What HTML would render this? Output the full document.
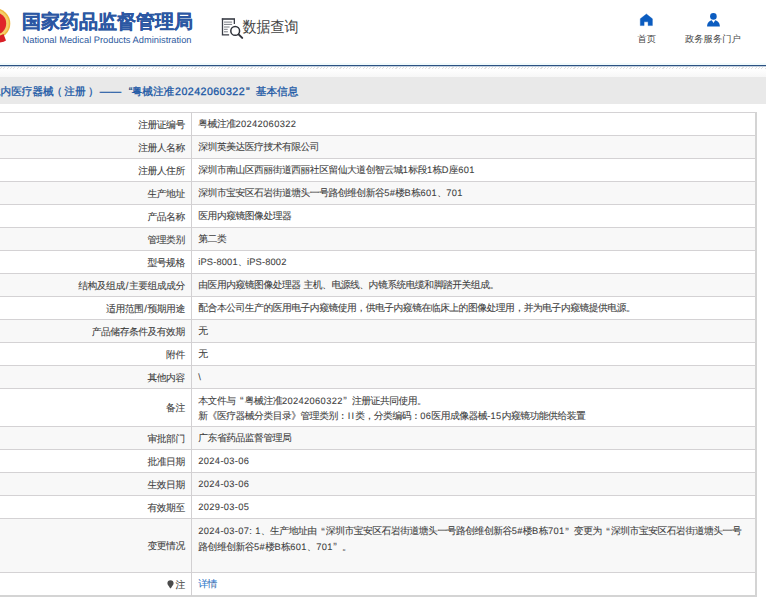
<!DOCTYPE html>
<html><head><meta charset="utf-8"><style>
*{margin:0;padding:0;box-sizing:border-box}
html,body{width:766px;height:604px;overflow:hidden;background:#fff}
body{position:relative;font-family:"Liberation Sans",sans-serif;color:#333;text-rendering:geometricPrecision}
.a{position:absolute;white-space:nowrap}
.lt{letter-spacing:0.35px;font-size:9.3px}
.qo{display:inline-block;width:9.3px;text-align:right;letter-spacing:0;font-size:10.5px;line-height:0;padding-right:1.2px;position:relative;top:0.6px;color:#555}
.qc{display:inline-block;width:9.3px;text-align:left;letter-spacing:0;font-size:10.5px;line-height:0;padding-left:0.6px;position:relative;top:0.6px;color:#555}
.lab{right:581.3px;text-align:right;font-size:9.8px;letter-spacing:-0.5px;line-height:22px;color:#3e3e3e;-webkit-text-stroke:0.08px #3e3e3e}
.con{left:198.3px;font-size:9.8px;letter-spacing:-0.5px;line-height:15.2px;color:#3e3e3e;-webkit-text-stroke:0.08px #3e3e3e}
.hl{left:0;width:755px;height:1px;background:#d4d2d4}
</style></head><body>
<svg class="a" style="left:0;top:0" width="20" height="50" viewBox="0 0 20 50">
  <circle cx="-5" cy="23.5" r="15.3" fill="#efb83c"/>
  <circle cx="-5" cy="23.5" r="13.8" fill="#f4cf6a"/>
  <circle cx="-5" cy="23.5" r="11.2" fill="#e0262a"/>
  <path d="M-10 34.5 Q-1 37 3.5 34 L6 40.5 Q3 43 -10 43 Z" fill="#d91f26"/>
</svg>
<div class="a" style="left:22px;top:10.8px;font-size:19px;font-weight:bold;color:#2b57a3;line-height:24px;-webkit-text-stroke:0.25px #2b57a3">国家药品监督管理局</div>
<div class="a" style="left:22.5px;top:34.5px;font-size:9.3px;color:#2d5a9e;line-height:11px">National Medical Products Administration</div>
<svg class="a" style="left:218px;top:14px" width="30" height="28" viewBox="0 0 30 28">
  <rect x="3.8" y="4.2" width="13.2" height="1.6" fill="#3a3d46"/>
  <path d="M16.35 5 V10 M4.5 4.5 V21.5 M3.8 20.9 H11.1" stroke="#3a3d46" stroke-width="1.3" fill="none"/>
  <path d="M6 8.1 H14.1 M6 10.4 H14.1 M6 13 H11.6 M6 15.3 H9.7 M6 17.8 H9.9" stroke="#6a6d75" stroke-width="0.9" fill="none"/>
  <circle cx="17.2" cy="16.9" r="4.4" stroke="#2f323a" stroke-width="1.5" fill="#fff"/>
  <path d="M20.6 20.4 L24.2 23.9" stroke="#2f323a" stroke-width="2" stroke-linecap="round"/>
</svg>
<div class="a" style="left:242.5px;top:15.2px;font-size:14px;color:#444;line-height:20px;transform:scaleY(1.1);transform-origin:0 0">数据查询</div>
<svg class="a" style="left:0;top:0" width="766" height="50" viewBox="0 0 766 50">
  <path d="M646.4 14 L652.4 18.8 V25.6 H648.1 V21.8 H644.1 V25.6 H640.3 V18.8 Z" fill="#0b5cc0" stroke="#0b5cc0" stroke-width="0.4" stroke-linejoin="round"/>
  <circle cx="713.4" cy="16.4" r="3.3" fill="#0b5cc0"/>
  <path d="M707.1 26.6 C707.1 22.6 709.3 20.7 711.8 20.2 L713.5 23 L715.2 20.2 C717.7 20.7 719.9 22.6 719.9 26.6 Z" fill="#0b5cc0"/>
</svg>
<div class="a" style="left:637.5px;top:32.5px;font-size:9.3px;color:#444;line-height:12px">首页</div>
<div class="a" style="left:685px;top:32.5px;font-size:9.3px;color:#444;line-height:12px">政务服务门户</div>
<div class="a" style="left:0;top:65px;width:766px;height:1px;background:#2b5283"></div>
<div class="a" style="left:0;top:66px;width:766px;height:1px;background:#c3cedb"></div><div class="a" style="left:0;top:63px;width:766px;height:2px;background:#f2fbfc"></div>
<div class="a" style="left:0;top:67px;width:766px;height:2px;background:repeating-linear-gradient(135deg,#fff 0,#fff 1.1px,#e2e2e2 1.1px,#e2e2e2 1.9px,#fff 1.9px,#fff 2.33px)"></div>
<div class="a" style="left:0;top:69px;width:766px;height:8px;background:linear-gradient(#fff,#f7f7f7)"></div>
<div class="a" style="left:0;top:77px;width:766px;height:27px;background:#e9e9e9"></div>

<div class="a" style="left:-10.15px;top:83.7px;font-size:10.65px;color:#1b58a5;line-height:16px;-webkit-text-stroke:0.3px #1b58a5">境内医疗器械<span style="position:relative;left:-2px">（</span>注册<span style="position:relative;left:2.3px">）</span><span style="display:inline-block;width:3.5px"></span>——<span class="qo" style="width:10.65px;font-size:11px;padding-right:0;position:relative;left:0.8px;top:0">“</span>粤械注准<span class="lt" style="letter-spacing:0.45px;font-size:10.65px;padding-left:0.8px">20242060322</span><span class="qc" style="width:10.65px;font-size:11px;padding-left:1px;top:0">”</span>基本信息</div>
<div class="a" style="left:0;top:136px;width:755px;height:22px;background:#f8f8f8"></div>
<div class="a" style="left:0;top:182px;width:755px;height:22px;background:#f8f8f8"></div>
<div class="a" style="left:0;top:228px;width:755px;height:22px;background:#f8f8f8"></div>
<div class="a" style="left:0;top:274px;width:755px;height:22px;background:#f8f8f8"></div>
<div class="a" style="left:0;top:320px;width:755px;height:22px;background:#f8f8f8"></div>
<div class="a" style="left:0;top:366px;width:755px;height:22px;background:#f8f8f8"></div>
<div class="a" style="left:0;top:427px;width:755px;height:22px;background:#f8f8f8"></div>
<div class="a" style="left:0;top:473px;width:755px;height:22px;background:#f8f8f8"></div>
<div class="a" style="left:0;top:519px;width:755px;height:53px;background:#f8f8f8"></div>
<div class="a hl" style="top:112px"></div>
<div class="a hl" style="top:135px"></div>
<div class="a hl" style="top:158px"></div>
<div class="a hl" style="top:181px"></div>
<div class="a hl" style="top:204px"></div>
<div class="a hl" style="top:227px"></div>
<div class="a hl" style="top:250px"></div>
<div class="a hl" style="top:273px"></div>
<div class="a hl" style="top:296px"></div>
<div class="a hl" style="top:319px"></div>
<div class="a hl" style="top:342px"></div>
<div class="a hl" style="top:365px"></div>
<div class="a hl" style="top:388px"></div>
<div class="a hl" style="top:426px"></div>
<div class="a hl" style="top:449px"></div>
<div class="a hl" style="top:472px"></div>
<div class="a hl" style="top:495px"></div>
<div class="a hl" style="top:518px"></div>
<div class="a hl" style="top:572px"></div>
<div class="a" style="left:0;top:595px;width:757px;height:2px;background:#d4d4d4"></div>
<div class="a" style="left:755px;top:112px;width:2px;height:485px;background:#d4d4d4"></div>
<div class="a" style="left:191px;top:112px;width:1px;height:484px;background:#d2d0d2"></div>
<div class="a lab" style="top:114.5px">注册证编号</div>
<div class="a con" style="top:117.4px">粤械注准<span class="lt">20242060322</span></div>
<div class="a lab" style="top:137.5px">注册人名称</div>
<div class="a con" style="top:140.4px">深圳英美达医疗技术有限公司</div>
<div class="a lab" style="top:160.5px">注册人住所</div>
<div class="a con" style="top:163.4px">深圳市南山区西丽街道西丽社区留仙大道创智云城<span class="lt">1</span>标段<span class="lt">1</span>栋<span class="lt">D</span>座<span class="lt">601</span></div>
<div class="a lab" style="top:183.5px">生产地址</div>
<div class="a con" style="top:186.4px">深圳市宝安区石岩街道塘头一号路创维创新谷<span class="lt">5#</span>楼<span class="lt">B</span>栋<span class="lt">601</span>、<span class="lt">701</span></div>
<div class="a lab" style="top:206.5px">产品名称</div>
<div class="a con" style="top:209.4px">医用内窥镜图像处理器</div>
<div class="a lab" style="top:229.5px">管理类别</div>
<div class="a con" style="top:232.4px">第二类</div>
<div class="a lab" style="top:252.5px">型号规格</div>
<div class="a con" style="top:255.4px"><span class="lt" style="letter-spacing:0.15px">iPS-8001</span>、<span class="lt" style="letter-spacing:0.15px">iPS-8002</span></div>
<div class="a lab" style="top:275.5px">结构及组成<span style="padding:0 1px">/</span>主要组成成分</div>
<div class="a con" style="top:278.4px">由医用内窥镜图像处理器<span class="lt"> </span>主机、电源线、内镜系统电缆和脚踏开关组成。</div>
<div class="a lab" style="top:298.5px">适用范围<span style="padding:0 1px">/</span>预期用途</div>
<div class="a con" style="top:301.4px">配合本公司生产的医用电子内窥镜使用，供电子内窥镜在临床上的图像处理用，并为电子内窥镜提供电源。</div>
<div class="a lab" style="top:321.5px">产品储存条件及有效期</div>
<div class="a con" style="top:324.4px">无</div>
<div class="a lab" style="top:344.5px">附件</div>
<div class="a con" style="top:347.4px">无</div>
<div class="a lab" style="top:367.5px">其他内容</div>
<div class="a con" style="top:370.4px"><span class="lt">\</span></div>
<div class="a lab" style="top:398.0px">备注</div>
<div class="a con" style="top:393.90000000000003px">本文件与<span class="qo">“</span>粤械注准<span class="lt">20242060322</span><span class="qc">”</span>注册证共同使用。<br>新《医疗器械分类目录》管理类别：<span class="lt" style="letter-spacing:1.2px;padding-left:0.6px">II</span>类，分类编码：<span class="lt">06</span>医用成像器械<span class="lt">-15</span>内窥镜功能供给装置</div>
<div class="a lab" style="top:428.5px">审批部门</div>
<div class="a con" style="top:431.4px">广东省药品监督管理局</div>
<div class="a lab" style="top:451.5px">批准日期</div>
<div class="a con" style="top:454.4px"><span class="lt">2024-03-06</span></div>
<div class="a lab" style="top:474.5px">生效日期</div>
<div class="a con" style="top:477.4px"><span class="lt">2024-03-06</span></div>
<div class="a lab" style="top:497.5px">有效期至</div>
<div class="a con" style="top:500.4px"><span class="lt">2029-03-05</span></div>
<div class="a lab" style="top:536.0px">变更情况</div>
<div class="a con" style="top:524.3000000000001px"><span class="lt">2024-03-07: 1</span>、生产地址由<span class="qo">“</span>深圳市宝安区石岩街道塘头一号路创维创新谷<span class="lt">5#</span>楼<span class="lt">B</span>栋<span class="lt">701</span><span class="qc">”</span>变更为<span class="qo">“</span>深圳市宝安区石岩街道塘头一号<br>路创维创新谷<span class="lt">5#</span>楼<span class="lt">B</span>栋<span class="lt">601</span>、<span class="lt">701</span><span class="qc">”</span>。<br>&nbsp;</div>
<div class="a lab" style="top:574.5px"><svg width="7" height="9" viewBox="0 0 7 9" style="vertical-align:-1px;margin-right:1.5px"><path d="M3.5 0.3 C5.4 0.3 6.6 1.6 6.6 3.3 C6.6 5 5 6.2 3.9 8.3 L3.1 8.3 C2 6.2 0.4 5 0.4 3.3 C0.4 1.6 1.6 0.3 3.5 0.3 Z" fill="#4a4a4a"/></svg>注</div>
<div class="a con" style="top:577.4px"><span style="color:#2e7bd6">详情</span></div>
</body></html>
